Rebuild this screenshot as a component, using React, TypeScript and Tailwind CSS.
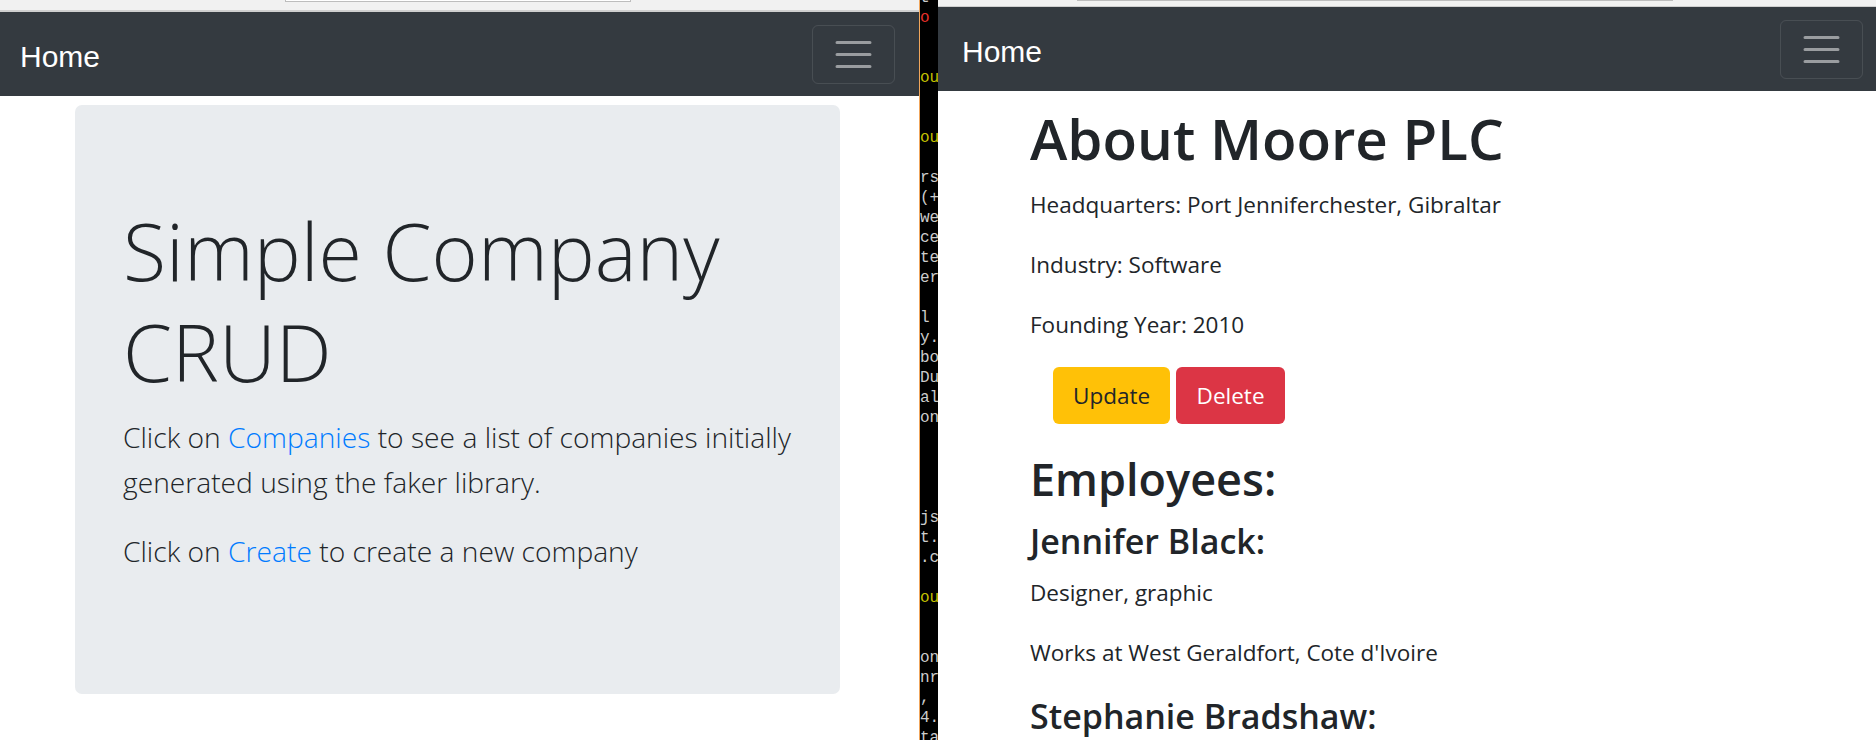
const TERM: [string, string][] = [
  ["t", "w"], ["o", "r"], ["", "w"], ["", "w"], ["ou", "y"], ["", "w"], ["", "w"], ["ou", "y"], ["", "w"],
  ["rs", "w"], ["(+", "w"], ["we", "w"], ["ce", "w"], ["te", "w"], ["er", "w"], ["", "w"], ["l", "w"],
  ["y.", "w"], ["bo", "w"], ["Du", "w"], ["al", "w"], ["on", "w"], ["", "w"], ["", "w"], ["", "w"],
  ["", "w"], ["js", "w"], ["t.", "w"], [".c", "w"], ["", "w"], ["ou", "y"], ["", "w"], ["", "w"],
  ["on", "w"], ["nr", "w"], [",", "w"], ["4.", "w"], ["ta", "w"],
];

const EMPLOYEES = [
  { name: "Jennifer Black", job: "Designer, graphic", place: "West Geraldfort, Cote d'Ivoire" },
  { name: "Stephanie Bradshaw", job: "Engineer, production", place: "Lake Michael, Peru" },
];

function Toggler() {
  return (
    <button className="flex h-[59px] w-[83px] items-center justify-center rounded-[6px] border border-white/10">
      <svg width="45" height="45" viewBox="0 0 30 30">
        <path
          d="M4 7h22M4 15h22M4 23h22"
          stroke="rgba(255,255,255,0.5)"
          strokeWidth="2"
          strokeLinecap="round"
        />
      </svg>
    </button>
  );
}

function Navbar() {
  return (
    <nav className="flex h-[84px] items-center justify-between bg-[#343a40] px-[24px]">
      <a className="mt-[4px] font-['Liberation_Sans',sans-serif] text-[30px] leading-[45px] text-white">Home</a>
      <Toggler />
    </nav>
  );
}

function Terminal() {
  return (
    <div className="w-[18px] shrink-0 overflow-hidden bg-black font-['Liberation_Mono',monospace] text-[16px] leading-[20px]">
      <div className="mt-[-12px]">
        {TERM.map(([t, c], i) => (
          <div
            key={i}
            className={`h-[20px] whitespace-pre ${c === "y" ? "text-[#c4c000]" : c === "r" ? "text-[#e8302a]" : "text-[#cccccc]"}`}
          >
            {t}
          </div>
        ))}
      </div>
    </div>
  );
}

function HomePage() {
  return (
    <div className="w-[919px] shrink-0 overflow-hidden">
      <div className="ml-[-4px] w-[923px]">
        <div className="relative h-[12px] border-b-2 border-[#cfcfcf] bg-[#f1f1f1]">
          <div className="absolute left-[289px] top-[-10px] h-[12px] w-[346px] border border-[#bdbdbd] bg-white" />
        </div>
        <Navbar />
        <div className="mx-auto w-[810px] px-[22.5px]">
          <div className="mt-[9px] rounded-[7px] bg-[#e9ecef] px-[48px] py-[96px] font-['Open_Sans',sans-serif] font-light">
            <h1 className="mb-[12px] text-[79px] leading-[100.8px]">
              Simple Company
              <br />
              CRUD
            </h1>
            <p className="mb-[24px] whitespace-nowrap text-[28.2px] leading-[45px]">
              Click on <a className="text-[#007bff]">Companies</a> to see a list of companies initially
              <br />
              generated using the faker library.
            </p>
            <p className="mb-[24px] whitespace-nowrap text-[28.2px] leading-[45px]">
              Click on <a className="text-[#007bff]">Create</a> to create a new company
            </p>
          </div>
        </div>
      </div>
    </div>
  );
}

function CompanyPage() {
  return (
    <div className="w-[938px] shrink-0 overflow-hidden">
      <div className="w-[949px]">
        <div className="relative h-[7px] border-b border-[#cfcfcf] bg-[#f1f1f1]">
          <div className="absolute left-[139px] top-[-12px] h-[13px] w-[596px] border border-[#bdbdbd] bg-white" />
        </div>
        <Navbar />
        <div className="mx-auto w-[810px] px-[22.5px] font-['Open_Sans',sans-serif] text-[22.5px] leading-[36px]">
          <h1 className="mb-[12px] mt-[12px] text-[56.5px] font-semibold leading-[72px]">About Moore PLC</h1>
          <p className="mb-[24px]">Headquarters: Port Jenniferchester, Gibraltar</p>
          <p className="mb-[24px]">Industry: Software</p>
          <p className="mb-[24px]">Founding Year: 2010</p>
          <div className="mb-[26px] ml-[23px] flex gap-[6px]">
            <button className="h-[57px] rounded-[6px] bg-[#ffc107] px-[20px] text-[#212529]">Update</button>
            <button className="h-[57px] rounded-[6px] bg-[#dc3545] px-[20.5px] text-white">Delete</button>
          </div>
          <h2 className="mb-[12px] text-[45px] font-semibold leading-[57.6px]">Employees:</h2>
          {EMPLOYEES.map((e) => (
            <div key={e.name}>
              <h4 className="mb-[12px] text-[34px] font-semibold leading-[43.2px]">{e.name}:</h4>
              <p className="mb-[24px]">{e.job}</p>
              <p className="mb-[24px]">Works at {e.place}</p>
            </div>
          ))}
        </div>
      </div>
    </div>
  );
}

export default function App() {
  return (
    <div className="flex h-[740px] w-[1876px] overflow-hidden bg-white text-[#212529]">
      <HomePage />
      <div className="w-px shrink-0 bg-[#f0a65c]" />
      <Terminal />
      <CompanyPage />
    </div>
  );
}
